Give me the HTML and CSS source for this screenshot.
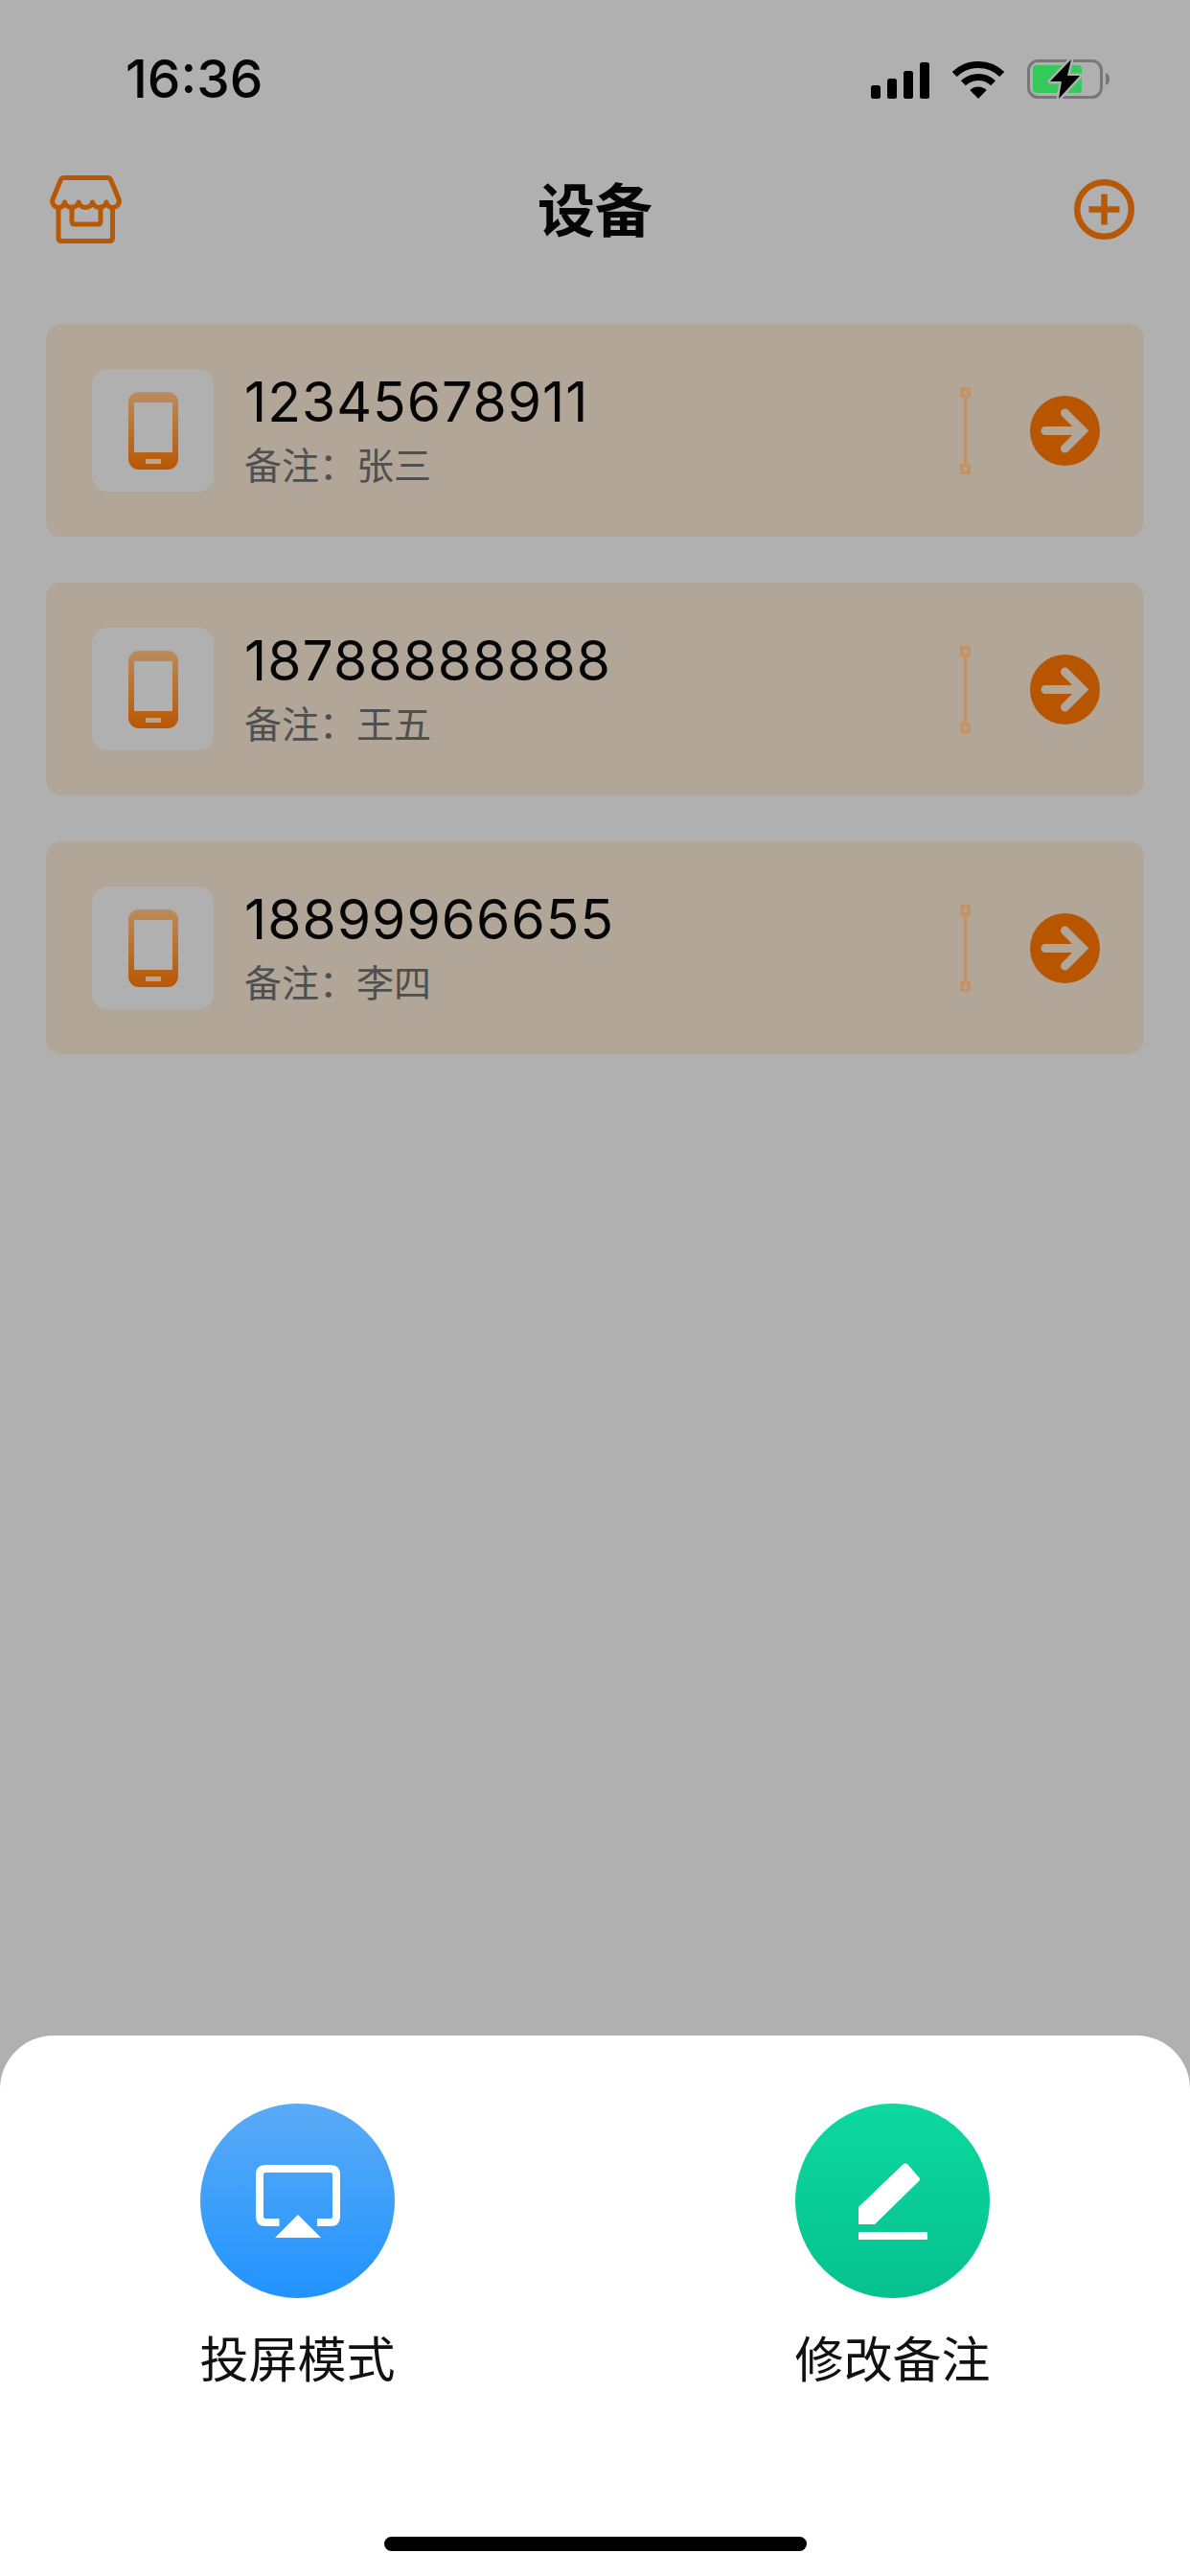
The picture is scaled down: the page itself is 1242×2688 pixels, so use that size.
FILE: index.html
```html
<!DOCTYPE html>
<html lang="zh-CN">
<head>
    <meta charset="UTF-8">
    <meta name="viewport" content="width=device-width, initial-scale=1.0">
    <title>设备</title>
    <link rel="stylesheet" href="styles.css">
</head>
<body>
    <div class="page">
        <div class="statusBar">
            <span class="time">16:36</span>
            <div class="statusIcons">
                <svg width="61" height="38" viewBox="0 0 61 38">
                    <rect x="0" y="24" width="10" height="14" rx="2.5" fill="#000"/>
                    <rect x="17" y="17" width="10" height="21" rx="2.5" fill="#000"/>
                    <rect x="34" y="9" width="10" height="29" rx="2.5" fill="#000"/>
                    <rect x="51" y="0" width="10" height="38" rx="2.5" fill="#000"/>
                </svg>
                <svg width="54" height="39" viewBox="0 0 54 39">
                    <path d="M2.3 13.5A35.5 35.5 0 0 1 51.7 13.5" fill="none" stroke="#000" stroke-width="7"/>
                    <path d="M11.4 22.8A22.5 22.5 0 0 1 42.6 22.8" fill="none" stroke="#000" stroke-width="7"/>
                    <path d="M27 39L18.3 30A12.5 12.5 0 0 1 35.7 30Z" fill="#000"/>
                </svg>
                <svg width="86" height="41" viewBox="0 0 86 41">
                    <rect x="1.5" y="1.5" width="76" height="38" rx="10" fill="none" stroke="#777" stroke-width="3"/>
                    <rect x="6" y="6" width="51" height="29" rx="4" fill="#34c95a"/>
                    <path d="M82 14C85 15 86 18 86 20.5C86 23 85 26 82 27Z" fill="#777"/>
                    <path d="M46 0L24 23H36L33 41L55 17H42Z" fill="#000" stroke="#b0b0b0" stroke-width="5" stroke-linejoin="round" paint-order="stroke"/>
                </svg>
            </div>
        </div>

        <div class="navBar">
            <svg class="navLeft" width="75" height="71" viewBox="0 0 75 71" fill="none" stroke="#b85804" stroke-width="5" stroke-linejoin="round" stroke-linecap="round">
                <path d="M15 2.5H60Q63 2.5 64 5.5L72 25C73.500 30 69.500 33.500 65.500 33.500C62 33.500 59.500 31 59 28A7.500 7.500 0 0 1 44.500 28A7.500 7.500 0 0 1 30 28A7.500 7.500 0 0 1 15.500 28C15 31 12.500 33.500 9.500 33.500C5.500 33.500 1.500 30 3 25L11 5.500Q12 2.500 15 2.500Z"/>
                <path d="M9 33.500V65Q9 68.500 12.500 68.500H62Q65.500 68.500 65.500 65V33.500"/>
                <path d="M23 33V48Q23 51 26 51H50Q53 51 53 48V33"/>
            </svg>
            <span class="navTitle">设备</span>
            <svg class="navRight" width="63" height="63" viewBox="0 0 63 63" fill="none" stroke="#b85804">
                <circle cx="31.500" cy="31.500" r="28.250" stroke-width="6.500"/>
                <path d="M15.500 31.500H47.500M31.500 15.500V47.500" stroke-width="6.500"/>
            </svg>
        </div>

        <div class="deviceList">
            <div class="deviceCard">
                <div class="deviceIcon">
                    <svg width="52" height="81" viewBox="0 0 52 81">
                        <defs>
                            <linearGradient id="phoneGrad" x1="0" y1="0" x2="0" y2="1">
                                <stop offset="0" stop-color="#bb8c5c"/>
                                <stop offset="1" stop-color="#b85703"/>
                            </linearGradient>
                        </defs>
                        <rect width="52" height="81" rx="11" fill="url(#phoneGrad)"/>
                        <rect x="6" y="11" width="40" height="52" fill="#b0b0b0"/>
                        <rect x="18" y="70" width="16" height="5" fill="#b1a698"/>
                    </svg>
                </div>
                <div class="deviceInfo">
                    <div class="devicePhone">12345678911</div>
                    <div class="deviceNote">备注：张三</div>
                </div>
                <svg class="deviceLink" width="11" height="91" viewBox="0 0 11 91" fill="none" stroke="#c09468" stroke-width="3.500">
                    <rect x="1.750" y="1.750" width="7.500" height="7.500"/>
                    <path d="M5.500 10V81"/>
                    <rect x="1.750" y="81.750" width="7.500" height="7.500"/>
                </svg>
                <svg class="deviceGo" width="73" height="73" viewBox="0 0 73 73">
                    <circle cx="36.500" cy="36.500" r="36.500" fill="#b85500"/>
                    <path d="M16 36.500H55M36.500 18L55 36.500L36.500 55" fill="none" stroke="#b1a698" stroke-width="9" stroke-linecap="round" stroke-linejoin="miter"/>
                </svg>
            </div>

            <div class="deviceCard">
                <div class="deviceIcon">
                    <svg width="52" height="81" viewBox="0 0 52 81">
                        <rect width="52" height="81" rx="11" fill="url(#phoneGrad)"/>
                        <rect x="6" y="11" width="40" height="52" fill="#b0b0b0"/>
                        <rect x="18" y="70" width="16" height="5" fill="#b1a698"/>
                    </svg>
                </div>
                <div class="deviceInfo">
                    <div class="devicePhone">18788888888</div>
                    <div class="deviceNote">备注：王五</div>
                </div>
                <svg class="deviceLink" width="11" height="91" viewBox="0 0 11 91" fill="none" stroke="#c09468" stroke-width="3.500">
                    <rect x="1.750" y="1.750" width="7.500" height="7.500"/>
                    <path d="M5.500 10V81"/>
                    <rect x="1.750" y="81.750" width="7.500" height="7.500"/>
                </svg>
                <svg class="deviceGo" width="73" height="73" viewBox="0 0 73 73">
                    <circle cx="36.500" cy="36.500" r="36.500" fill="#b85500"/>
                    <path d="M16 36.500H55M36.500 18L55 36.500L36.500 55" fill="none" stroke="#b1a698" stroke-width="9" stroke-linecap="round" stroke-linejoin="miter"/>
                </svg>
            </div>

            <div class="deviceCard">
                <div class="deviceIcon">
                    <svg width="52" height="81" viewBox="0 0 52 81">
                        <rect width="52" height="81" rx="11" fill="url(#phoneGrad)"/>
                        <rect x="6" y="11" width="40" height="52" fill="#b0b0b0"/>
                        <rect x="18" y="70" width="16" height="5" fill="#b1a698"/>
                    </svg>
                </div>
                <div class="deviceInfo">
                    <div class="devicePhone">18899966655</div>
                    <div class="deviceNote">备注：李四</div>
                </div>
                <svg class="deviceLink" width="11" height="91" viewBox="0 0 11 91" fill="none" stroke="#c09468" stroke-width="3.500">
                    <rect x="1.750" y="1.750" width="7.500" height="7.500"/>
                    <path d="M5.500 10V81"/>
                    <rect x="1.750" y="81.750" width="7.500" height="7.500"/>
                </svg>
                <svg class="deviceGo" width="73" height="73" viewBox="0 0 73 73">
                    <circle cx="36.500" cy="36.500" r="36.500" fill="#b85500"/>
                    <path d="M16 36.500H55M36.500 18L55 36.500L36.500 55" fill="none" stroke="#b1a698" stroke-width="9" stroke-linecap="round" stroke-linejoin="miter"/>
                </svg>
            </div>
        </div>

        <div class="sheet">
            <div class="sheetActions">
                <div class="sheetAction">
                    <div class="actionCircle actionBlue">
                        <svg width="88" height="76" viewBox="0 0 88 76">
                            <path d="M24.500 60H10Q4 60 4 54V10Q4 4 10 4H78Q84 4 84 10V54Q84 60 78 60H64" fill="none" stroke="#fff" stroke-width="8"/>
                            <path d="M44 52L68 76H20Z" fill="#fff"/>
                        </svg>
                    </div>
                    <span class="actionLabel">投屏模式</span>
                </div>
                <div class="sheetAction">
                    <div class="actionCircle actionGreen">
                        <svg width="72" height="80" viewBox="0 0 72 80">
                            <path d="M0 46L47 1Q49 0 51 1L63 15Q65 17 63 19L17 64H0Z" fill="#fff"/>
                            <rect x="0" y="72" width="72" height="8" fill="#fff"/>
                        </svg>
                    </div>
                    <span class="actionLabel">修改备注</span>
                </div>
            </div>
            <div class="homeBar"></div>
        </div>
    </div>
</body>
</html>
```

FILE: styles.css
```css
html, body {
    margin: 0;
    padding: 0;
}

.page {
    width: 1242px;
    height: 2688px;
    background-color: #b0b0b0;
    display: flex;
    flex-direction: column;
    overflow: hidden;
    font-family: Inter, "Noto Sans CJK SC", sans-serif;
    color: #050505;
}

.statusBar {
    display: flex;
    justify-content: space-between;
    align-items: flex-end;
    height: 41px;
    padding: 62px 84px 0 131px;
}

.time {
    font-size: 55px;
    font-weight: 500;
    line-height: 41px;
}

.statusIcons {
    display: flex;
    align-items: flex-end;
    gap: 24px;
}

.navBar {
    display: grid;
    grid-template-columns: 1fr auto 1fr;
    align-items: center;
    height: 71px;
    margin-top: 80px;
    padding: 0 52px;
}

.navLeft {
    justify-self: start;
}

.navRight {
    justify-self: end;
    margin-right: 6px;
}

.navTitle {
    font-family: "Noto Sans CJK SC", sans-serif;
    font-size: 60px;
    font-weight: 700;
    line-height: 65px;
    margin-bottom: 6px;
}

.deviceList {
    display: flex;
    flex-direction: column;
    gap: 48px;
    margin-top: 84px;
    padding: 0 48px;
}

.deviceCard {
    display: flex;
    align-items: center;
    height: 222px;
    box-sizing: border-box;
    padding: 0 46px 0 48px;
    background-color: #b1a698;
    border-radius: 16px;
}

.deviceIcon {
    display: flex;
    justify-content: center;
    align-items: center;
    width: 127px;
    height: 128px;
    background-color: #b0b0b0;
    border-radius: 16px;
}

.deviceInfo {
    flex: 1;
    margin-left: 32px;
}

.devicePhone {
    font-size: 57px;
    letter-spacing: 1px;
    line-height: 68px;
    margin-bottom: 6px;
}

.deviceNote {
    font-family: "Noto Sans CJK SC", sans-serif;
    font-size: 39px;
    line-height: 46px;
    margin-bottom: 6px;
    color: #4f4f4f;
}

.deviceGo {
    margin-left: 62px;
}

.sheet {
    display: flex;
    flex-direction: column;
    margin-top: auto;
    height: 564px;
    box-sizing: border-box;
    padding-top: 71px;
    background-color: #fff;
    border-radius: 56px 56px 0 0;
}

.sheetActions {
    display: grid;
    grid-template-columns: 1fr 1fr;
}

.sheetAction {
    display: flex;
    flex-direction: column;
    align-items: center;
}

.actionCircle {
    display: flex;
    justify-content: center;
    align-items: center;
    width: 203px;
    height: 203px;
    border-radius: 50%;
}

.actionBlue {
    background: linear-gradient(#5aabf6, #2193ff);
}

.actionGreen {
    background: linear-gradient(#0cd89f, #06c18e);
}

.actionLabel {
    margin-top: 31px;
    font-family: "Noto Sans CJK SC", sans-serif;
    font-size: 51px;
    line-height: 60px;
    color: #111;
}

.homeBar {
    align-self: center;
    width: 441px;
    height: 15px;
    margin-top: auto;
    margin-bottom: 26px;
    background-color: #000;
    border-radius: 8px;
}
```
